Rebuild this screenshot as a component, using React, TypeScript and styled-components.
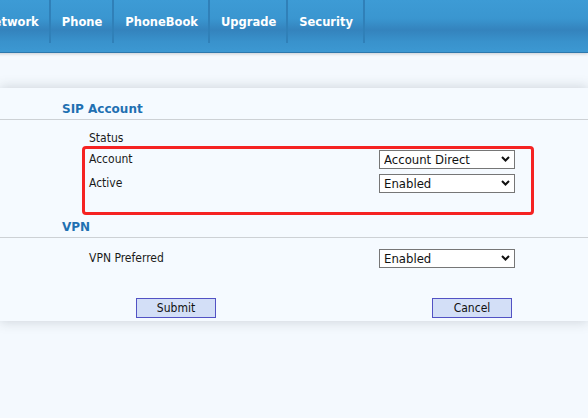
import React from "react";
import styled, { createGlobalStyle } from "styled-components";

const GlobalStyle = createGlobalStyle`
  html, body {
    margin: 0;
    padding: 0;
    background: #f4f9fe;
    overflow: hidden;
  }
  body {
    font-family: "DejaVu Sans Condensed", "Liberation Sans", sans-serif;
  }
`;

const Page = styled.div`
  width: 588px;
  height: 418px;
  background: #f4f9fe;
  overflow: hidden;
`;

const NavBar = styled.nav`
  height: 52px;
  border-bottom: 1px solid #2c78ad;
  background: linear-gradient(
    to bottom,
    #3d9bd5 0%,
    #3a96d0 35%,
    #3483bd 58%,
    #3992cc 80%,
    #3c98d2 100%
  );
  box-shadow: 0 1px 3px rgba(0, 0, 0, 0.18);
  display: flex;
  align-items: flex-start;
  margin-left: -27px;
  position: relative;
  z-index: 2;
`;

const NavItem = styled.a`
  height: 43px;
  display: flex;
  align-items: center;
  padding: 0 10px 0 11px;
  border-right: 2px solid #3080b8;
  color: #ffffff;
  font-family: "DejaVu Sans", "Liberation Sans", sans-serif;
  font-weight: bold;
  font-size: 11.5px;
  text-decoration: none;
  white-space: nowrap;
  box-sizing: border-box;
`;

const SubBar = styled.div`
  height: 35px;
`;

const Card = styled.section`
  position: relative;
  background: #f5faff;
  box-shadow: 0 0 12px rgba(50, 60, 70, 0.22);
  z-index: 1;
`;

const SectionTitle = styled.h2`
  margin: 0;
  padding: 13px 0 2px 62px;
  line-height: 16px;
  font-family: "DejaVu Sans", "Liberation Sans", sans-serif;
  font-size: 12px;
  font-weight: bold;
  color: #1f70b2;
  border-bottom: 1px solid #cdd1d5;
`;

const Rows = styled.div<{ $bottom: number }>`
  padding: 8px 0 ${(p) => p.$bottom}px 89px;
`;

const Row = styled.div<{ $h?: number }>`
  height: ${(p) => p.$h ?? 24}px;
  display: grid;
  grid-template-columns: 290px 136px;
  align-items: center;
  font-size: 12px;
  color: #1a1a1a;
`;

const SelectWrap = styled.div`
  position: relative;
  width: 136px;
  height: 19px;
`;

const Select = styled.select`
  appearance: none;
  -webkit-appearance: none;
  width: 136px;
  height: 19px;
  margin: 0;
  padding: 0 0 0 4px;
  border: 1px solid #767676;
  border-radius: 0;
  background: #ffffff;
  color: #111;
  font-family: "DejaVu Sans Condensed", "Liberation Sans", sans-serif;
  font-size: 13px;
  line-height: 17px;
  box-sizing: border-box;
  outline: none;
`;

const Chevron = styled.svg`
  position: absolute;
  right: 5px;
  top: 6px;
  pointer-events: none;
`;

const Actions = styled.div`
  display: flex;
  gap: 216px;
  padding: 28px 0 3px 136px;
`;

const Button = styled.button`
  width: 80px;
  height: 20px;
  margin: 0;
  padding: 0;
  border: 1px solid #5252c4;
  border-radius: 0;
  background: #d3dff7;
  color: #111;
  font-family: "DejaVu Sans Condensed", "Liberation Sans", sans-serif;
  font-size: 12px;
  box-sizing: border-box;
`;

/* Red highlight drawn over the account rows */
const Highlight = styled.div`
  position: absolute;
  left: 82px;
  top: 58px;
  width: 452px;
  height: 69px;
  border: 3px solid #f52222;
  border-radius: 4px;
  box-sizing: border-box;
  pointer-events: none;
`;

type Field = { label: string; options?: string[] };

const Dropdown: React.FC<{ options: string[] }> = ({ options }) => (
  <SelectWrap>
    <Select defaultValue={options[0]}>
      {options.map((o) => (
        <option key={o}>{o}</option>
      ))}
    </Select>
    <Chevron width="9" height="6" viewBox="0 0 9 6">
      <path d="M1 1 L4.5 4.5 L8 1" fill="none" stroke="#111" strokeWidth="2" />
    </Chevron>
  </SelectWrap>
);

const sipFields: Field[] = [
  { label: "Status" },
  { label: "Account", options: ["Account Direct", "Account 1", "Account 2"] },
  { label: "Active", options: ["Enabled", "Disabled"] },
];

const vpnFields: Field[] = [
  { label: "VPN Preferred", options: ["Enabled", "Disabled"] },
];

const tabs = ["Network", "Phone", "PhoneBook", "Upgrade", "Security"];

export default function App() {
  return (
    <Page>
      <GlobalStyle />
      <NavBar>
        {tabs.map((t) => (
          <NavItem key={t} href="#">
            {t}
          </NavItem>
        ))}
      </NavBar>
      <SubBar />
      <Card>
        <SectionTitle>SIP Account</SectionTitle>
        <Rows $bottom={11}>
          {sipFields.map((f) => (
            <Row key={f.label} $h={f.options ? 24 : 19}>
              <span>{f.label}</span>
              {f.options && <Dropdown options={f.options} />}
            </Row>
          ))}
        </Rows>
        <SectionTitle>VPN</SectionTitle>
        <Rows $bottom={0}>
          {vpnFields.map((f) => (
            <Row key={f.label}>
              <span>{f.label}</span>
              {f.options && <Dropdown options={f.options} />}
            </Row>
          ))}
        </Rows>
        <Actions>
          <Button type="button">Submit</Button>
          <Button type="button">Cancel</Button>
        </Actions>
        <Highlight />
      </Card>
    </Page>
  );
}
